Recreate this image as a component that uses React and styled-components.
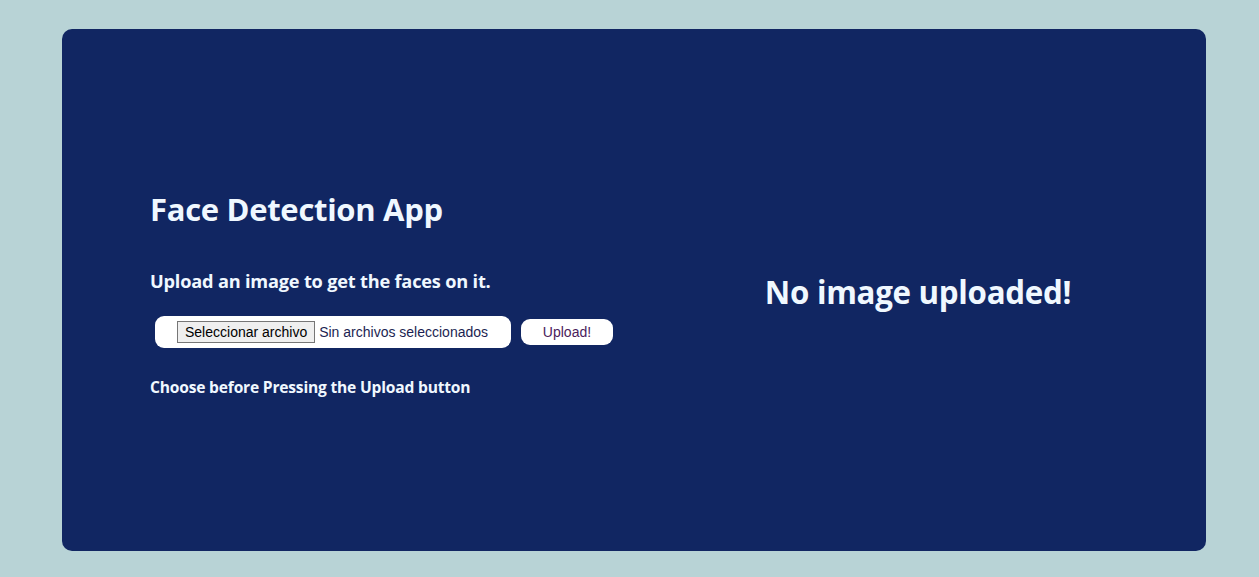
import React from "react";
import styled, { createGlobalStyle } from "styled-components";

const Global = createGlobalStyle`
  html, body { margin: 0; padding: 0; background: #b8d3d6; }
  body { font-family: "Open Sans", "Noto Sans", sans-serif; }
`;

const Page = styled.div`
  padding: 29px 53px 26px 62px;
  height: 577px;
  box-sizing: border-box;
  display: flex;
`;

const Card = styled.main`
  flex: 1;
  background: #112662;
  border-radius: 10px;
  display: grid;
  grid-template-columns: 1fr 1fr;
  align-items: center;
  color: #f0f8ff;
`;

const Left = styled.section`
  padding-left: 88px;
  padding-top: 5px;
  display: flex;
  flex-direction: column;
`;

const Title = styled.h1`
  margin: 0;
  font-size: 31px;
  font-weight: 700;
  letter-spacing: -0.3px;
  line-height: 40px;
`;

const Subtitle = styled.h3`
  margin: 40px 0 0;
  font-size: 18.2px;
  font-weight: 700;
  letter-spacing: -0.2px;
  line-height: 24px;
`;

const FormRow = styled.form`
  display: flex;
  align-items: center;
  gap: 10px;
  margin-top: 23px;
  margin-left: 5px;
`;

const FileBox = styled.label`
  display: flex;
  align-items: center;
  background: #fff;
  border-radius: 9px;
  width: 356px;
  height: 32px;
  box-sizing: border-box;
  padding-left: 22px;
  font-family: "Liberation Sans", Arial, sans-serif;
  font-size: 14px;
`;

const FileButton = styled.span`
  display: inline-flex;
  align-items: center;
  height: 22px;
  box-sizing: border-box;
  padding: 0 7px;
  background: #efefef;
  border: 1px solid #767676;
  color: #000;
`;

const FileText = styled.span`
  margin-left: 4px;
  color: #1c1f52;
`;

const UploadButton = styled.button`
  width: 92px;
  height: 26px;
  border: none;
  border-radius: 9px;
  background: #fff;
  color: #4a1c5c;
  font-family: "Liberation Sans", Arial, sans-serif;
  font-size: 14px;
  padding: 0;
`;

const Hint = styled.h5`
  margin: 29px 0 0;
  font-size: 15.6px;
  font-weight: 700;
  letter-spacing: -0.2px;
  line-height: 20px;
`;

const Right = styled.section`
  display: flex;
  justify-content: center;
  padding-top: 4px;
  padding-right: 4px;
`;

const Empty = styled.h1`
  margin: 0;
  font-size: 31.3px;
  font-weight: 700;
  letter-spacing: -0.3px;
  line-height: 40px;
`;

export default function App() {
  return (
    <>
      <Global />
      <Page>
        <Card>
          <Left>
            <Title>Face Detection App</Title>
            <Subtitle>Upload an image to get the faces on it.</Subtitle>
            <FormRow onSubmit={(e) => e.preventDefault()}>
              <FileBox>
                <FileButton>Seleccionar archivo</FileButton>
                <FileText>Sin archivos seleccionados</FileText>
              </FileBox>
              <UploadButton type="submit">Upload!</UploadButton>
            </FormRow>
            <Hint>Choose before Pressing the Upload button</Hint>
          </Left>
          <Right>
            <Empty>No image uploaded!</Empty>
          </Right>
        </Card>
      </Page>
    </>
  );
}
